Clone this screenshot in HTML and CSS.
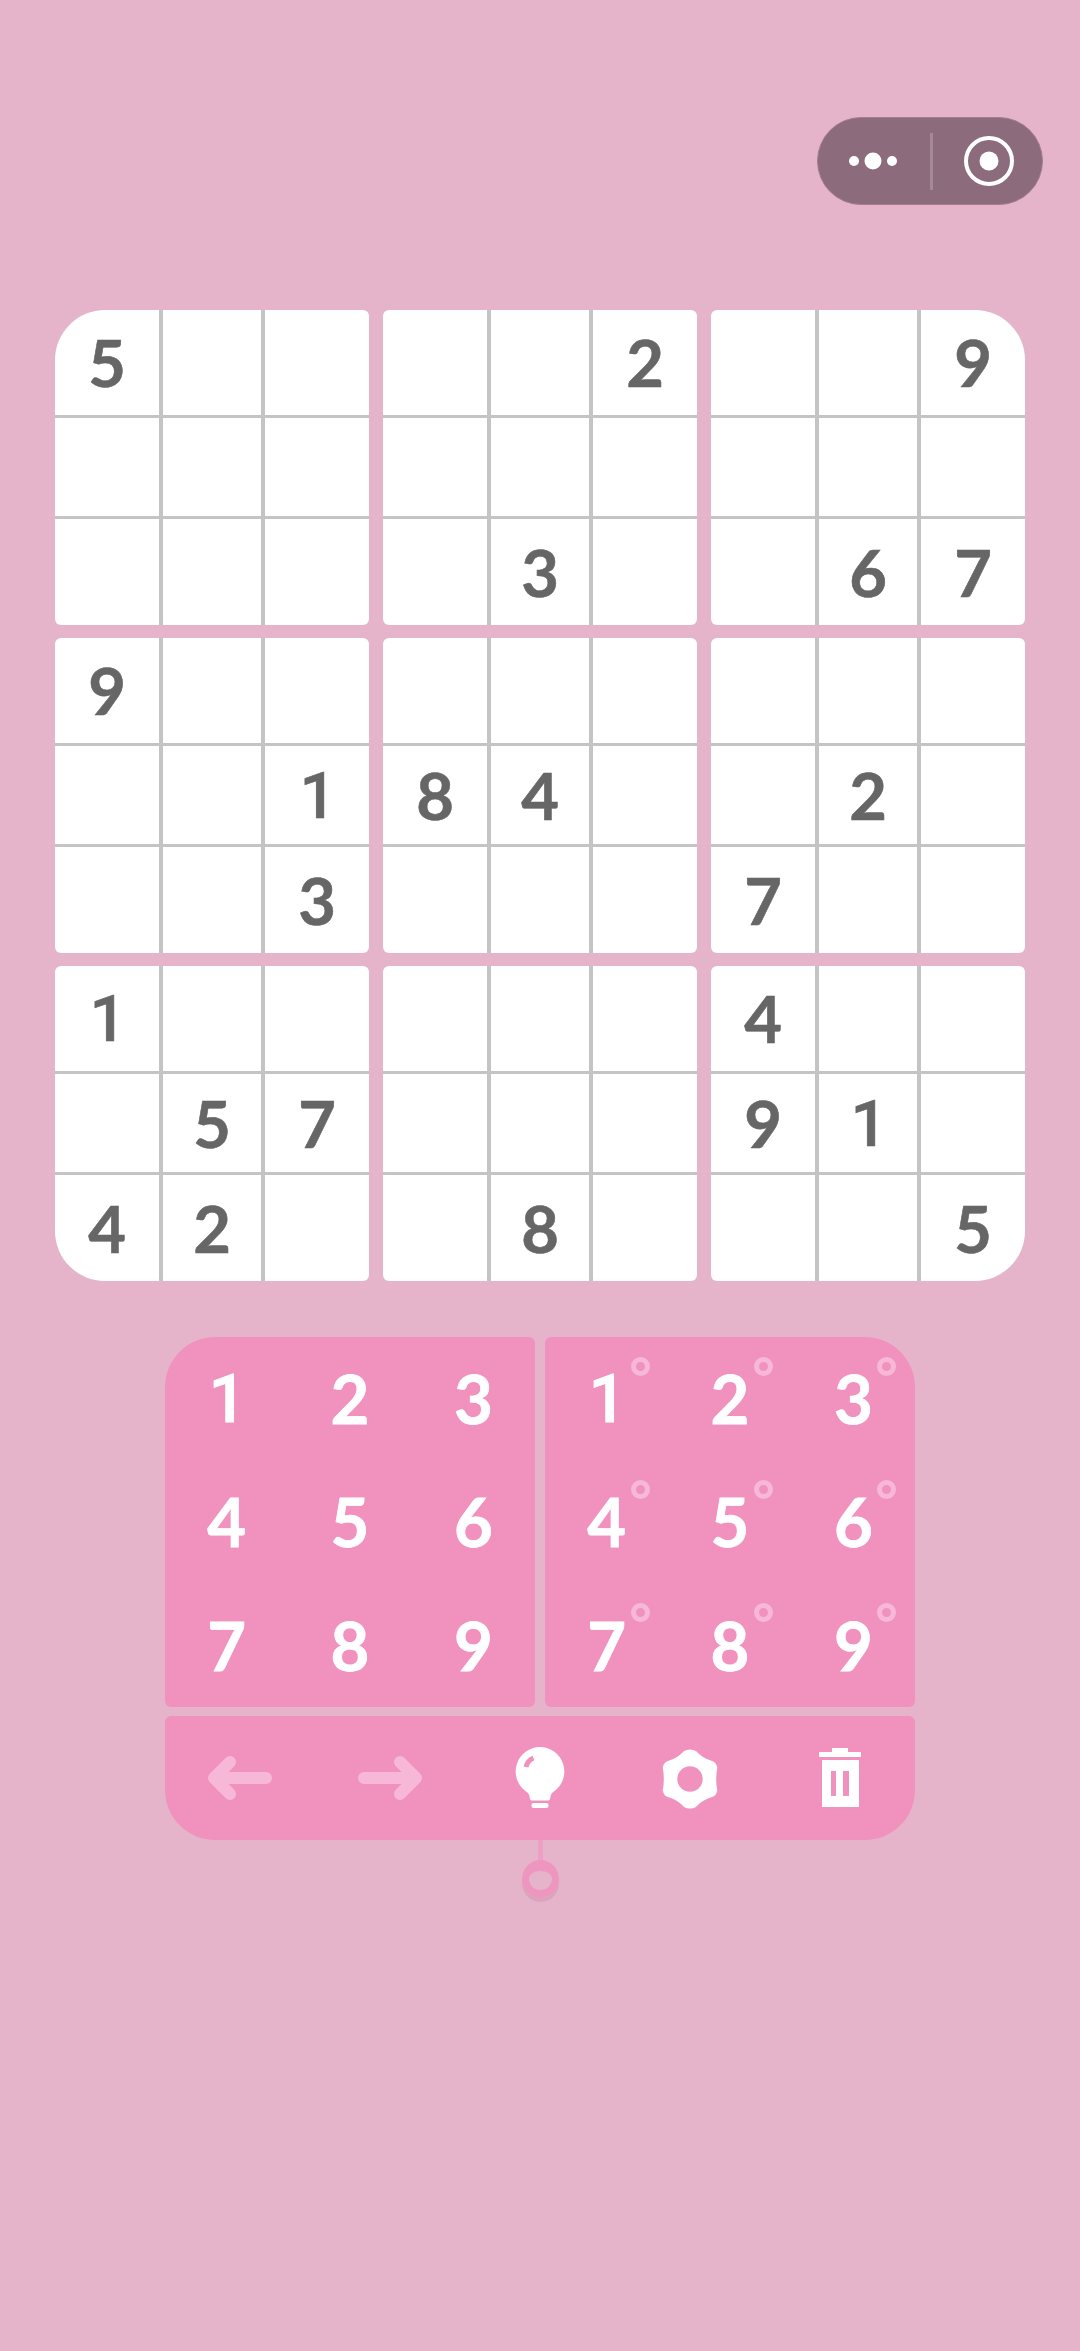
FILE: index.html
```html
<!DOCTYPE html>
<html lang="en">
<head>
    <meta charset="UTF-8">
    <title>Sudoku</title>
    <link rel="stylesheet" href="styles.css">
</head>
<body>
    <header class="topbar">
        <div class="capsule">
            <svg class="capsule-more" viewBox="0 0 56 20"><circle cx="6" cy="10" r="5"/><circle cx="25" cy="10" r="8.500"/><circle cx="44" cy="10" r="5"/></svg>
            <span class="capsule-line"></span>
            <svg class="capsule-close" viewBox="0 0 52 52"><circle class="ring" cx="26" cy="26" r="23"/><circle cx="26" cy="26" r="9.500"/></svg>
        </div>
    </header>

    <main class="board">
        <div class="block corner-tl">
            <div class="cell">5</div><div class="cell"></div><div class="cell"></div>
            <div class="cell"></div><div class="cell"></div><div class="cell"></div>
            <div class="cell"></div><div class="cell"></div><div class="cell"></div>
        </div>
        <div class="block">
            <div class="cell"></div><div class="cell"></div><div class="cell">2</div>
            <div class="cell"></div><div class="cell"></div><div class="cell"></div>
            <div class="cell"></div><div class="cell">3</div><div class="cell"></div>
        </div>
        <div class="block corner-tr">
            <div class="cell"></div><div class="cell"></div><div class="cell">9</div>
            <div class="cell"></div><div class="cell"></div><div class="cell"></div>
            <div class="cell"></div><div class="cell">6</div><div class="cell">7</div>
        </div>
        <div class="block">
            <div class="cell">9</div><div class="cell"></div><div class="cell"></div>
            <div class="cell"></div><div class="cell"></div><div class="cell one">1</div>
            <div class="cell"></div><div class="cell"></div><div class="cell">3</div>
        </div>
        <div class="block">
            <div class="cell"></div><div class="cell"></div><div class="cell"></div>
            <div class="cell">8</div><div class="cell">4</div><div class="cell"></div>
            <div class="cell"></div><div class="cell"></div><div class="cell"></div>
        </div>
        <div class="block">
            <div class="cell"></div><div class="cell"></div><div class="cell"></div>
            <div class="cell"></div><div class="cell">2</div><div class="cell"></div>
            <div class="cell">7</div><div class="cell"></div><div class="cell"></div>
        </div>
        <div class="block corner-bl">
            <div class="cell one">1</div><div class="cell"></div><div class="cell"></div>
            <div class="cell"></div><div class="cell">5</div><div class="cell">7</div>
            <div class="cell">4</div><div class="cell">2</div><div class="cell"></div>
        </div>
        <div class="block">
            <div class="cell"></div><div class="cell"></div><div class="cell"></div>
            <div class="cell"></div><div class="cell"></div><div class="cell"></div>
            <div class="cell"></div><div class="cell">8</div><div class="cell"></div>
        </div>
        <div class="block corner-br">
            <div class="cell">4</div><div class="cell"></div><div class="cell"></div>
            <div class="cell">9</div><div class="cell one">1</div><div class="cell"></div>
            <div class="cell"></div><div class="cell"></div><div class="cell">5</div>
        </div>
    </main>

    <section class="keypad">
        <div class="keys">
            <div class="panel panel-left">
                <div class="key one">1</div><div class="key">2</div><div class="key">3</div>
                <div class="key">4</div><div class="key">5</div><div class="key">6</div>
                <div class="key">7</div><div class="key">8</div><div class="key">9</div>
            </div>
            <div class="panel panel-right">
                <div class="key note one">1</div><div class="key note">2</div><div class="key note">3</div>
                <div class="key note">4</div><div class="key note">5</div><div class="key note">6</div>
                <div class="key note">7</div><div class="key note">8</div><div class="key note">9</div>
            </div>
        </div>
        <div class="tools">
            <div class="tool">
                <svg class="icon-arrow" viewBox="0 0 64 44"><path d="M58 22H6M22 6 6 22l16 16"/></svg>
            </div>
            <div class="tool">
                <svg class="icon-arrow" viewBox="0 0 64 44"><path d="M6 22h52M42 6l16 16-16 16"/></svg>
            </div>
            <div class="tool">
                <svg class="icon-bulb" viewBox="0 0 50 62">
                    <path class="solid" d="M25 0a24.500 24.500 0 0 1 14 44.500q-2 1-3 3l-1 4.500q-.5 1.500-2 1.500H17q-1.500 0-2-1.500l-1-4.500q-1-2-3-3A24.500 24.500 0 0 1 25 0Z"/>
                    <rect class="solid" x="16.500" y="56" width="17" height="5" rx="2"/>
                    <path class="shine" d="M11 20q1.500-6.500 7.500-9"/>
                </svg>
            </div>
            <div class="tool">
                <svg class="icon-gear" viewBox="0 0 60 60"><path fill-rule="evenodd" d="M24 2Q30-1 36 2 42 9 52 12 56 13 57.300 18.500 55 30 57.300 41.500 56 47 52 48 42 51 36 58 30 61 24 58 18 51 8 48 4 47 2.700 41.500 5 30 2.700 18.500 4 13 8 12 18 9 24 2ZM30 17.300a12.700 12.700 0 1 0 0 25.400 12.700 12.700 0 0 0 0-25.400Z"/></svg>
            </div>
            <div class="tool">
                <svg class="icon-trash" viewBox="0 0 42 60"><path fill-rule="evenodd" d="M13 0h16v4h13v5H0V4h13ZM3 12h37v47H3ZM12 23v25h5V23Zm12 0v25h6V23Z"/></svg>
            </div>
        </div>
        <div class="pull">
            <span class="pull-line"></span>
            <span class="pull-ring"></span>
        </div>
    </section>
</body>
</html>
```

FILE: styles.css
```css
* { margin: 0; padding: 0; box-sizing: border-box }
*::after { box-sizing: border-box }
html, body { height: 100% }
body { background: #e6b4ca; font-family: Lato, "Liberation Sans", sans-serif; font-weight: 700; overflow: hidden }

/* top right capsule */
.topbar { height: 310px; padding: 117px 37px 0 0; display: flex; justify-content: flex-end; align-items: flex-start }
.capsule { width: 226px; height: 88px; border-radius: 44px; background: #8c6b7c; border: 1px solid #a27f90; display: flex; align-items: center; position: relative }
.capsule svg { fill: #fff; display: block; flex: none }
.capsule-more { width: 56px; height: 20px; margin-left: 30px }
.capsule-line { width: 3px; height: 57px; background: #a58997; margin-left: 26px }
.capsule-close { width: 52px; height: 52px; margin-left: 30px; margin-top: -1px }
.capsule-close .ring { fill: none; stroke: #fff; stroke-width: 4px }

/* board */
.board { width: 970px; margin-left: 55px; display: grid; grid-template-columns: repeat(3, 314px); column-gap: 14px; row-gap: 13px }
.block { display: grid; grid-template-columns: 104px 98px 104px; grid-template-rows: 105px 98px 106px; gap: 3px 4px; background: #c4c4c4; border-radius: 6px; overflow: hidden }
.corner-tl { border-top-left-radius: 50px }
.corner-tr { border-top-right-radius: 50px }
.corner-bl { border-bottom-left-radius: 50px }
.corner-br { border-bottom-right-radius: 50px }
.cell { background: #fff; color: #666; font-size: 65px; line-height: 1; -webkit-text-stroke: .6px #666; display: flex; align-items: center; justify-content: center }
.cell.one { font-family: Roboto, sans-serif; font-weight: 500; padding: 2px 0 0 2px; -webkit-text-stroke: .6px #666 }

/* number keys */
.keypad { width: 750px; margin: 56px 0 0 165px }
.keys { display: flex; gap: 10px }
.panel { width: 370px; height: 370px; background: #f192be; border-radius: 6px; display: grid; grid-template-columns: repeat(3, 1fr); grid-template-rows: repeat(3, 1fr) }
.panel-left { border-top-left-radius: 50px }
.panel-right { border-top-right-radius: 50px }
.key { color: #fff; font-size: 67px; line-height: 1; -webkit-text-stroke: .8px #fff; display: flex; align-items: center; justify-content: center; position: relative }
.key.one { font-family: Roboto, sans-serif; font-weight: 500; padding: 2px 0 0 2px }
.note::after { content: ""; position: absolute; left: 50%; top: 50%; width: 19px; height: 19px; margin: -42px 0 0 24px; border-radius: 50%; border: 5px solid #f6b8d6 }

/* bottom tools */
.tools { height: 124px; margin-top: 9px; background: #f192be; border-radius: 6px 6px 50px 50px; display: flex }
.tool { flex: 1; display: flex; align-items: center; justify-content: center }
.tool svg { display: block; fill: #fff }
.icon-arrow { width: 64px; height: 44px }
.tool .icon-arrow { fill: none; stroke: #f6b8d6; stroke-width: 12; stroke-linecap: round; stroke-linejoin: round }
.icon-bulb { width: 50px; height: 62px }
.icon-bulb .shine { fill: none; stroke: #f192be; stroke-width: 5px }
.icon-gear { width: 60px; height: 60px; margin-top: 1px }
.icon-trash { width: 42px; height: 60px; margin-top: -1px }

/* little pull handle under the keypad */
.pull { display: flex; flex-direction: column; align-items: center }
.pull-line { width: 5px; height: 20px; background: #ee9fc5 }
.pull-ring { width: 37px; height: 38px; border-radius: 50%; border-style: solid; border-width: 11px 7px 8px; border-color: #ee96c0; box-shadow: 0 4px 0 #d9a5bd }
```
